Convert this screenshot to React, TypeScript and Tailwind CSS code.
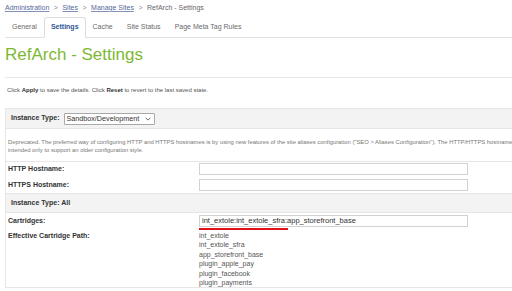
import React from 'react';

const tabs = ['General', 'Settings', 'Cache', 'Site Status', 'Page Meta Tag Rules'];

const cartridgePath = [
    'int_extole',
    'int_extole_sfra',
    'app_storefront_base',
    'plugin_apple_pay',
    'plugin_facebook',
    'plugin_payments',
];

const Breadcrumb: React.FC = () => {
    const links = ['Administration', 'Sites', 'Manage Sites'];
    return (
        <div className="flex items-center h-[14px] pl-[5px] text-[7px] text-[#666]">
            {links.map(link => (
                <React.Fragment key={link}>
                    <span className="text-[#55689a] underline decoration-[#8090b8]">{link}</span>
                    <span className="mx-[4.5px] text-[#888]">&gt;</span>
                </React.Fragment>
            ))}
            <span>RefArch - Settings</span>
        </div>
    );
};

const Tabs: React.FC<{ active: string }> = ({ active }) => (
    <div className="flex items-end h-[22px] mt-[1px] ml-[5px] border-b border-[#e2e2e2]">
        {tabs.map(tab =>
            tab === active ? (
                <div
                    key={tab}
                    className="h-[21px] -mb-px px-[6px] flex items-center bg-white border border-[#dcdcdc] border-b-white rounded-t-[3px] text-[7px] font-bold text-[#2d5896]"
                >
                    {tab}
                </div>
            ) : (
                <div key={tab} className="h-[20px] px-[7px] flex items-center text-[7px] text-[#6a6a6a]">
                    {tab}
                </div>
            )
        )}
    </div>
);

const TextInput: React.FC<{ value?: string }> = ({ value }) => (
    <div className="w-[269px] h-[12px] border border-[#d2d2d2] bg-white flex items-center pl-[2px] text-[7.5px] text-[#333] leading-none whitespace-nowrap overflow-hidden">
        {value}
    </div>
);

const FormRow: React.FC<{ label: string; className?: string; children: React.ReactNode }> = ({ label, className, children }) => (
    <div className={`flex items-start pl-[2px] ${className ?? ''}`}>
        <div className="w-[191px] h-[12px] flex items-center text-[7px] font-bold text-[#333]">{label}</div>
        {children}
    </div>
);

const App: React.FC = () => {
    return (
        <div className="w-[512px] h-[291px] overflow-hidden bg-white font-['Liberation_Sans',Arial,sans-serif]">
            <div className="pt-[1px]">
                <Breadcrumb />
            </div>
            <Tabs active="Settings" />

            <h1 className="mt-[6px] pl-[5px] h-[22px] text-[17px] leading-[22px] text-[#7db832] font-normal">
                RefArch - Settings
            </h1>

            <div className="mt-[11px] ml-[5px] border-t border-[#e8e8e8]" />

            <p className="mt-[7px] pl-[7px] text-[6px] leading-[10px] text-[#555]">
                Click <b className="text-[#333]">Apply</b> to save the details. Click <b className="text-[#333]">Reset</b> to revert to the last saved state.
            </p>

            <div className="mt-[13px] ml-[5px] w-[520px] border border-[#e6e6e6]">
                {/* instance type selector */}
                <div className="h-[20px] bg-[#f3f3f3] border-b border-[#e6e6e6] flex items-center pl-[5px]">
                    <span className="text-[7px] font-bold text-[#333]">Instance Type:</span>
                    <div className="ml-[4px] w-[91px] h-[12px] bg-white border border-[#a9a9a9] rounded-[1px] flex items-center justify-between pl-[2px] pr-[3px]">
                        <span className="text-[7.2px] text-[#333] leading-none">Sandbox/Development</span>
                        <svg width="6" height="4" viewBox="0 0 6 4" fill="none">
                            <path d="M0.6 0.8 L3 3.1 L5.4 0.8" stroke="#444" strokeWidth="0.8" />
                        </svg>
                    </div>
                </div>

                <div className="h-[33px] border-b border-[#e6e6e6] pt-[9px] pl-[2px] text-[5.85px] leading-[8px] text-[#777] whitespace-nowrap overflow-hidden">
                    <div>
                        Deprecated. The preferred way of configuring HTTP and HTTPS hostnames is by using new features of the site aliases configuration ("SEO &gt; Aliases Configuration"). The HTTP/HTTPS hostnames
                    </div>
                    <div>intended only to support an older configuration style.</div>
                </div>

                <FormRow label="HTTP Hostname:" className="h-[16px] pt-[1px]">
                    <TextInput />
                </FormRow>
                <FormRow label="HTTPS Hostname:" className="h-[15px] pt-[1px]">
                    <TextInput />
                </FormRow>

                <div className="h-[20px] bg-[#f3f3f3] border-y border-[#e6e6e6] flex items-center pl-[5px] text-[7px] font-bold text-[#333]">
                    Instance Type: All
                </div>

                <FormRow label="Cartridges:" className="h-[18px] pt-[2px]">
                    <div className="relative">
                        <TextInput value="int_extole:int_extole_sfra:app_storefront_base" />
                        <div className="absolute left-0 top-[13px] w-[89px] h-[2px] bg-[#e3121a]" />
                    </div>
                </FormRow>

                <div className="flex items-start pl-[2px]">
                    <div className="w-[191px] text-[7px] leading-[9.4px] font-bold text-[#333]">Effective Cartridge Path:</div>
                    <ul className="text-[7px] leading-[9.4px] text-[#555]">
                        {cartridgePath.map(c => (
                            <li key={c}>{c}</li>
                        ))}
                    </ul>
                </div>
            </div>
        </div>
    );
};

export default App;
